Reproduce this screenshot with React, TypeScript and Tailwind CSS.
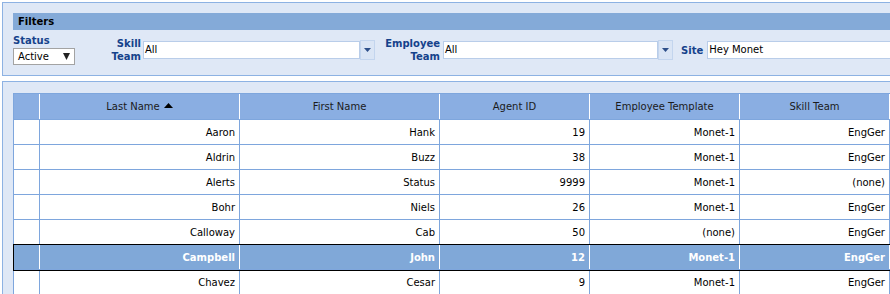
import React from 'react'

type Agent = {
  last: string
  first: string
  id: string
  template: string
  team: string
  selected?: boolean
}

const agents: Agent[] = [
  { last: 'Aaron', first: 'Hank', id: '19', template: 'Monet-1', team: 'EngGer' },
  { last: 'Aldrin', first: 'Buzz', id: '38', template: 'Monet-1', team: 'EngGer' },
  { last: 'Alerts', first: 'Status', id: '9999', template: 'Monet-1', team: '(none)' },
  { last: 'Bohr', first: 'Niels', id: '26', template: 'Monet-1', team: 'EngGer' },
  { last: 'Calloway', first: 'Cab', id: '50', template: '(none)', team: 'EngGer' },
  { last: 'Campbell', first: 'John', id: '12', template: 'Monet-1', team: 'EngGer', selected: true },
  { last: 'Chavez', first: 'Cesar', id: '9', template: 'Monet-1', team: 'EngGer' },
]

const font = { fontFamily: '"DejaVu Sans", Verdana, sans-serif' }

function ComboBox({ value, width }: { value: string; width: string }) {
  return (
    <div className="flex items-center">
      <div
        className={`h-[18px] ${width} border border-[#b9cde9] bg-white pl-[1px] text-[10px] leading-[16px] text-black`}
      >
        {value}
      </div>
      <div className="flex h-[20px] w-[15px] items-center justify-center border border-[#c3d5ee] bg-[#dae5f5]">
        <svg width="7" height="4" viewBox="0 0 7 4">
          <path d="M0 0h7L3.5 4z" fill="#2d4f8a" />
        </svg>
      </div>
    </div>
  )
}

function HeaderCell({ label, width, sorted }: { label: string; width: string; sorted?: boolean }) {
  return (
    <div
      className={`${width} flex shrink-0 items-center justify-center border-r border-white text-[10px] text-[#1b1b1b]`}
    >
      {label}
      {sorted && (
        <svg className="mb-[3px] ml-[4px]" width="9" height="5" viewBox="0 0 9 5">
          <path d="M0 5h9L4.5 0z" fill="#000" />
        </svg>
      )}
    </div>
  )
}

export default function App() {
  const cols = ['w-[200px]', 'w-[200px]', 'w-[150px]', 'w-[150px]', 'w-[150px]']

  return (
    <div className="h-[294px] w-[890px] overflow-hidden bg-white" style={font}>
      {/* filters */}
      <div className="ml-[2px] mt-[2px] h-[74px] w-[1000px] border border-[#8db2e3] bg-[#dfe8f6] pl-[10px] pt-[10px]">
        <div className="h-[17px] bg-[#84aad8] pl-[5px] text-[10px] font-bold leading-[17px] text-black">
          Filters
        </div>
        <div className="mt-[5px] flex items-center">
          <div className="flex w-[94px] flex-col">
            <span className="text-[10px] font-bold leading-[12px] text-[#15428b]">Status</span>
            <div className="mt-[1px] flex h-[17px] w-[62px] items-center justify-between border border-[#a3a3a3] bg-white px-[4px] text-[10px] text-black">
              Active
              <svg width="7" height="7" viewBox="0 0 7 7">
                <path d="M0 0h7L3.5 7z" fill="#222" />
              </svg>
            </div>
          </div>
          <div className="w-[34px] text-right text-[10px] font-bold leading-[13px] text-[#15428b]">
            Skill
            <br />
            Team
          </div>
          <div className="ml-[2px]">
            <ComboBox value="All" width="w-[217px]" />
          </div>
          <div className="ml-[10px] w-[55px] text-right text-[10px] font-bold leading-[13px] text-[#15428b]">
            Employee
            <br />
            Team
          </div>
          <div className="ml-[3px]">
            <ComboBox value="All" width="w-[215px]" />
          </div>
          <div className="ml-[8px] text-[10px] font-bold text-[#15428b]">Site</div>
          <div className="ml-[4px] h-[18px] w-[250px] border border-[#b9cde9] bg-white pl-[1px] text-[10px] leading-[16px] text-black">
            Hey Monet
          </div>
        </div>
      </div>

      {/* grid */}
      <div className="ml-[2px] mt-[5px] h-[300px] w-[1000px] border border-[#8db2e3] bg-[#dfe8f6] pl-[10px] pt-[11px]">
        <div className="w-[900px] border-l border-t border-[#7ea6dd]">
          <div className="flex h-[26px] border-b border-[#7ea6dd] bg-[#8aaee2]">
            <div className="w-[26px] shrink-0 border-r border-white" />
            <HeaderCell label="Last Name" width="w-[200px]" sorted />
            <HeaderCell label="First Name" width="w-[200px]" />
            <HeaderCell label="Agent ID" width="w-[150px]" />
            <HeaderCell label="Employee Template" width="w-[150px]" />
            <HeaderCell label="Skill Team" width="w-[150px]" />
          </div>
          {agents.map((a) => {
            const values = [a.last, a.first, a.id, a.template, a.team]
            return (
              <div
                key={a.last}
                className={
                  a.selected
                    ? 'flex h-[25px] border-b border-[#7ea6dd] bg-[#80a8d8] font-bold text-white outline outline-1 outline-black'
                    : 'flex h-[25px] border-b border-[#7ea6dd] bg-white text-black'
                }
              >
                <div
                  className={`w-[26px] shrink-0 border-r ${a.selected ? 'border-white' : 'border-[#7ea6dd]'}`}
                />
                {values.map((v, i) => (
                  <div
                    key={i}
                    className={`${cols[i]} flex shrink-0 items-center justify-end border-r pr-[4px] text-[10px] ${
                      a.selected ? 'border-white' : 'border-[#7ea6dd]'
                    }`}
                  >
                    {v}
                  </div>
                ))}
              </div>
            )
          })}
        </div>
      </div>
    </div>
  )
}
